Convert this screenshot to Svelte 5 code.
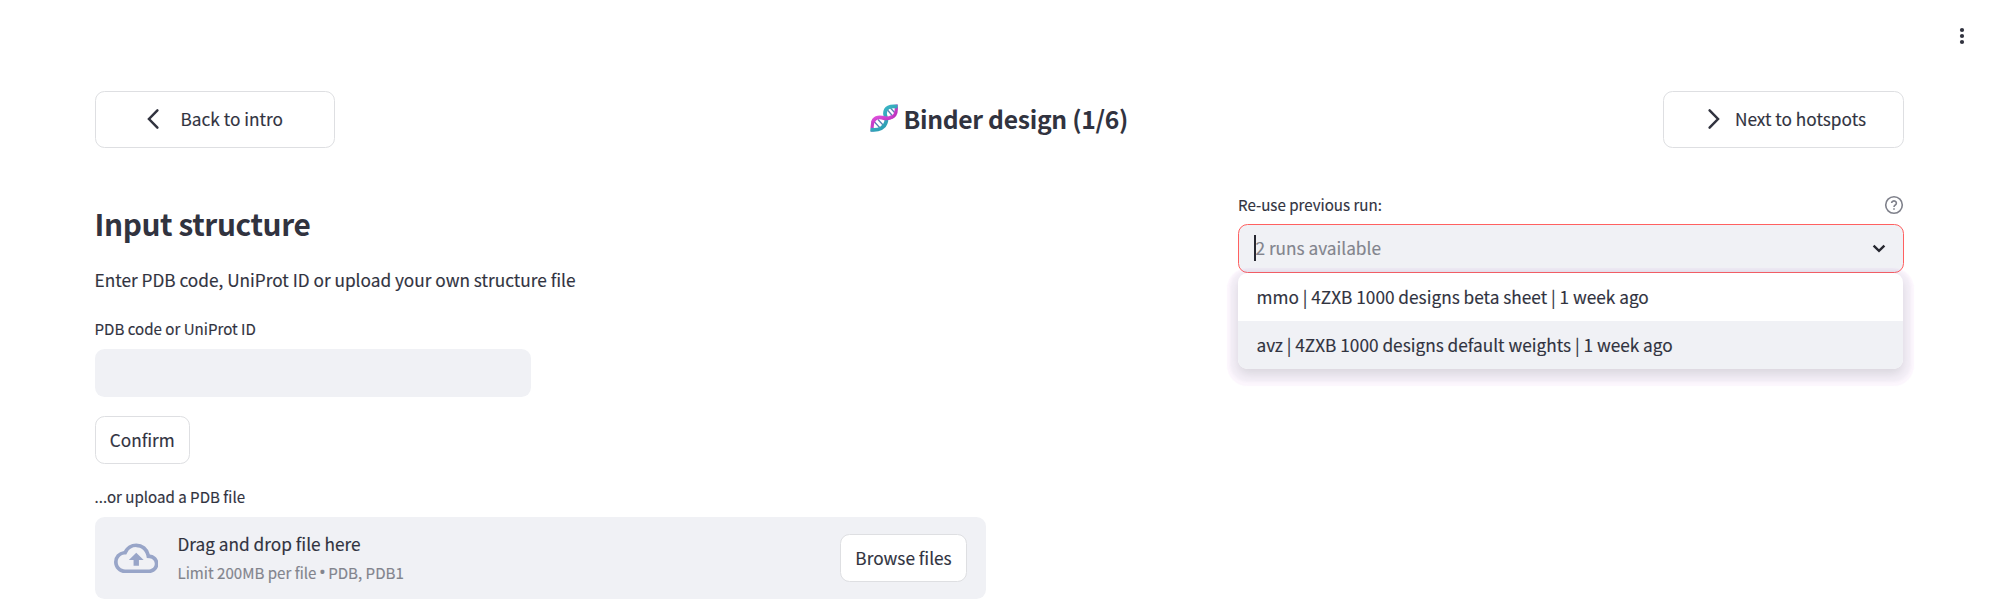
<script>
  let code = $state('');
  const runs = [
    'mmo | 4ZXB 1000 designs beta sheet | 1 week ago',
    'avz | 4ZXB 1000 designs default weights | 1 week ago'
  ];
  const highlighted = 1;
</script>

<div class="page">
  <button class="kebab" aria-label="Main menu">
    <svg width="6" height="18" viewBox="0 0 6 18" fill="currentColor">
      <circle cx="3" cy="3" r="2.1" /><circle cx="3" cy="9" r="2.1" /><circle cx="3" cy="15" r="2.1" />
    </svg>
  </button>

  <header>
    <button class="nav back">
      <svg width="14" height="22" viewBox="0 0 14 22"><path d="M11.4 2.4 3 11l8.4 8.6" /></svg>
      <span>Back to intro</span>
    </button>
    <h3>
      <svg class="dna" width="28" height="28" viewBox="0 0 28 28" fill="none">
        <defs>
          <linearGradient id="cy" x1="0" y1="0" x2="1" y2="1"><stop offset="0" stop-color="#45c3cf" /><stop offset="1" stop-color="#238fa8" /></linearGradient>
          <linearGradient id="mg" x1="0" y1="0" x2="1" y2="1"><stop offset="0" stop-color="#e052dd" /><stop offset="1" stop-color="#b52bb8" /></linearGradient>
        </defs>
        <path d="M17.500 6l6 7M20.500 4l4.500 5M4.500 18l6 6.500M8 15.500l5.500 6" stroke="#5a7fb4" stroke-width="1.300" />
        <path d="M26 .5C27 7 25.500 12.500 20.500 13.800" stroke="url(#mg)" stroke-width="3.200" />
        <path d="M2.500 27.500C2 24 1.500 19 4 15.800" stroke="#c63cc8" stroke-width="3.200" />
        <path d="M27.500 2.600C20 1.500 15 3.500 15 9.500C15 12 17 14 16.200 17.500C15 23.500 9 27 .5 25.600" stroke="url(#cy)" stroke-width="3.800" />
        <path d="M3 18.500C4 14 8 12.800 12 13.600C16 14.800 19 15 22 12.800" stroke="url(#mg)" stroke-width="3.800" />
      </svg>
      <span>Binder design (1/6)</span>
    </h3>
    <button class="nav next">
      <svg width="14" height="22" viewBox="0 0 14 22"><path d="M2.600 2.400 11 11l-8.400 8.600" /></svg>
      <span>Next to hotspots</span>
    </button>
  </header>

  <main>
    <section class="structure">
      <h2>Input structure</h2>
      <p>Enter PDB code, UniProt ID or upload your own structure file</p>
      <label for="code">PDB code or UniProt ID</label>
      <input id="code" bind:value={code} />
      <button class="confirm">Confirm</button>
      <div class="label">...or upload a PDB file</div>
      <div class="drop">
        <svg width="44.500" height="44.500" viewBox="0 0 24 24" fill="#98a5c8">
          <path d="M19.350 10.040A7.490 7.490 0 0 0 12 4C9.110 4 6.600 5.640 5.350 8.040A5.994 5.994 0 0 0 0 14c0 3.310 2.690 6 6 6h13c2.760 0 5-2.240 5-5 0-2.640-2.050-4.780-4.650-4.960zM19 18H6c-2.210 0-4-1.790-4-4 0-2.050 1.530-3.760 3.560-3.970l1.070-.11.5-.95A5.469 5.469 0 0 1 12 6c2.620 0 4.880 1.860 5.390 4.430l.3 1.500 1.530.11A2.980 2.980 0 0 1 22 15c0 1.650-1.350 3-3 3zM8 13h2.550v3h2.900v-3H16l-4-4z" />
        </svg>
        <div class="hint">
          <span>Drag and drop file here</span>
          <small>Limit 200MB per file <i>•</i> PDB, PDB1</small>
        </div>
        <button class="browse">Browse files</button>
      </div>
    </section>

    <section class="reuse">
      <div class="top">
        <span class="label">Re-use previous run:</span>
        <svg width="20" height="20" viewBox="0 0 20 20" fill="none" stroke="#7f818b" stroke-width="1.600">
          <circle cx="10" cy="10" r="8.300" />
          <path d="M7.600 8.100a2.400 2.200 0 1 1 3.700 1.900c-.9.600-1.300.9-1.300 1.900" />
          <path d="M10 13.200v1.600" />
        </svg>
      </div>
      <div class="select">
        <i class="caret"></i>
        <span>2 runs available</span>
        <svg width="14" height="9" viewBox="0 0 14 9"><path d="M1.600 1.600 7 6.800l5.400-5.200" fill="none" stroke="#262730" stroke-width="2.400" /></svg>
        <ul>
          {#each runs as run, i}
            <li class:on={i === highlighted}>{run}</li>
          {/each}
        </ul>
      </div>
    </section>
  </main>
</div>

<style>
  :global(body) { background: #fff; }
  * { box-sizing: border-box; }
  .page {
    position: relative;
    height: 614px;
    padding: 91px 96px 0 94.500px;
    overflow: hidden;
    color: #31333f;
    font: 17.240px/28px 'Noto Sans CJK SC', 'Noto Sans', sans-serif;
    -webkit-text-stroke: .15px;
  }
  button {
    margin: 0;
    padding: 0;
    color: inherit;
    font: inherit;
    background: #fff;
    border: 1px solid #dedfe2;
    border-radius: 9.500px;
  }
  .kebab { position: absolute; top: 27px; right: 35.500px; height: 18px; border: 0; display: flex; }
  header { display: flex; justify-content: space-between; height: 56.500px; }
  .nav { display: flex; align-items: center; width: 240.500px; padding-bottom: 1px; }
  .nav svg { fill: none; stroke: #31333f; stroke-width: 2.500; stroke-linecap: round; }
  .back { padding-left: 50px; gap: 21px; }
  .next { padding-left: 42.500px; gap: 14px; }
  h3 { display: flex; align-items: center; gap: 5px; margin: 0; padding-bottom: 2px; font-size: 24.700px; line-height: 32px; letter-spacing: -.3px; -webkit-text-stroke: 0; }
  .dna { flex: none; }
  main { display: flex; justify-content: space-between; }
  .structure { width: 891.500px; padding-top: 57.500px; }
  h2 { margin: 0; font-size: 29.800px; line-height: 36px; letter-spacing: -.4px; -webkit-text-stroke: 0; }
  p { margin: 25px 0 21.500px; }
  label, .label { display: block; font-size: 15.100px; line-height: 24px; }
  input {
    display: block;
    width: 436.500px;
    height: 48px;
    margin: 9.500px 0 19px;
    padding: 0 15px;
    color: inherit;
    font: inherit;
    background: #f0f1f5;
    border: 0;
    border-radius: 9.500px;
  }
  .confirm { display: block; width: 95.500px; height: 48px; margin-bottom: 20px; padding-bottom: 1px; }
  .drop {
    display: flex;
    align-items: center;
    height: 82px;
    margin-top: 9px;
    padding: 0 19px;
    background: #f0f1f5;
    border-radius: 9.500px;
  }
  .hint { display: flex; flex-direction: column; flex: 1; margin-left: 19.500px; }
  small { font-size: 15.100px; color: #82848d; }
  small i { font: 18px/1 'Open Sans', sans-serif; margin: 0 -.9px; }
  .browse { width: 127px; height: 48px; padding-bottom: 1px; }
  .reuse { width: 666px; padding-top: 44.500px; }
  .top { display: flex; align-items: center; justify-content: space-between; height: 24px; margin-bottom: 8px; }
  .top .label { margin-top: -1px; }
  .top svg { margin-top: 2px; }
  .select {
    position: relative;
    display: flex;
    align-items: center;
    height: 48.500px;
    padding: 0 17.500px 0 14.500px;
    color: #82848d;
    background: #f0f1f5;
    border: 1px solid #ff6060;
    border-radius: 9.500px;
  }
  .select span { flex: 1; }
  .caret { width: 2px; height: 26px; background: #262730; }
  ul {
    position: absolute;
    top: 48px;
    left: -1.500px;
    right: 0;
    margin: 0;
    padding: 0;
    list-style: none;
    color: #31333f;
    background: #fff;
    border-radius: 9.500px;
    overflow: hidden;
    box-shadow:
      0 5px 11px rgba(38, 39, 48, .14),
      0 5px 2px 8px rgba(80, 110, 150, .035),
      0 6px 1px 11px rgba(200, 100, 220, .055);
  }
  li { height: 48px; padding: 10px 19px; }
  .on { padding-top: 10px; background: #f0f1f5; }
</style>
